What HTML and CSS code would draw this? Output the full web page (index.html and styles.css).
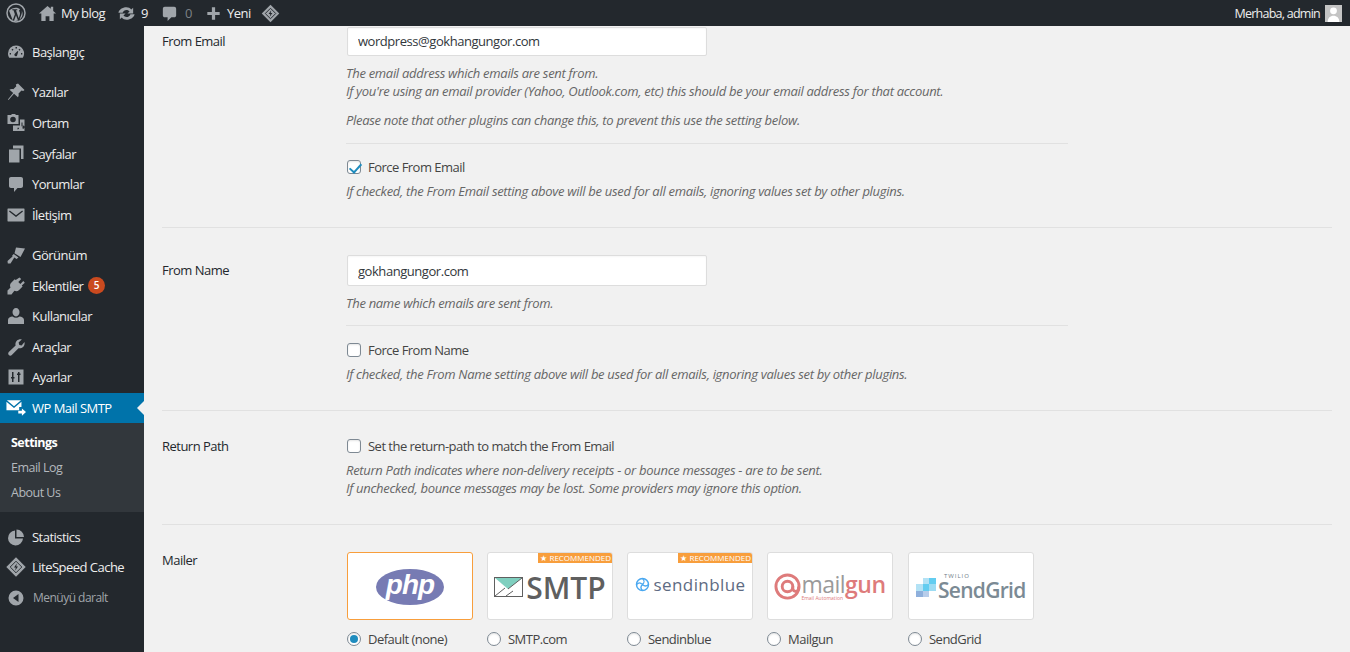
FILE: index.html
```html
<!DOCTYPE html>
<html lang="tr">
<head>
  <meta charset="UTF-8">
  <title>WP Mail SMTP Settings</title>
  <link rel="stylesheet" href="styles.css">
</head>
<body>

  <!-- TOP BAR -->
  <header class="admin-bar">
    <div class="bar-left">
      <span class="bar-item wp-item">
        <svg class="bar-icon wp-icon" viewBox="0 0 20 20"><circle cx="10" cy="10" r="9" fill="none" stroke="currentColor" stroke-width="1.500"/><path d="M2.900 7.300 6.700 17.300l2.200-6L7.500 7.300H6.300V6.300h5v1h-1.300l2.700 8 1-3c.5-1.600.4-2.500-.2-3.500-.6-.9-.6-2.200.8-2.300-2.600-2.600-7.800-2.400-11.400 1.500zM10 12.200l-2 5.500c1.300.4 2.700.3 4-.1zM15.700 7.600c.4 1.300.2 2.600-.3 4l-1.900 5c3-1.700 4-6 2.200-9z" fill="currentColor"/></svg>
      </span>
      <span class="bar-item home-item">
        <svg class="bar-icon" viewBox="0 0 20 20"><path d="M10 2 1 10h2.500v8h4.500v-5h4v5h4.500v-8H19l-3-2.700V3h-2.500v2.100z" fill="currentColor"/></svg>
        <span>My blog</span>
      </span>
      <span class="bar-item update-item">
        <svg class="bar-icon" viewBox="0 0 20 20"><path d="M10 3.500c2 0 3.800.9 5 2.400L17 4v6h-6l2.200-2.200c-.8-.9-2-1.500-3.200-1.500-1.900 0-3.500 1.200-4.100 3H1.500c.7-3.300 4-5.800 8.500-5.800zM10 16.500c-2 0-3.800-.9-5-2.400L3 16v-6h6l-2.200 2.200c.8.9 2 1.500 3.200 1.500 1.900 0 3.500-1.200 4.100-3h4.400c-.7 3.300-4 5.800-8.500 5.800z" fill="currentColor"/></svg>
        <span class="bar-count">9</span>
      </span>
      <span class="bar-item comment-item">
        <svg class="bar-icon" viewBox="0 0 20 20"><path d="M5 3h10c1.100 0 2 .9 2 2v7c0 1.100-.9 2-2 2h-3l-4 4v-4H5c-1.100 0-2-.9-2-2V5c0-1.100.9-2 2-2z" fill="currentColor"/></svg>
        <span class="dim-count">0</span>
      </span>
      <span class="bar-item new-item">
        <svg class="bar-icon" viewBox="0 0 20 20"><path d="M8.300 3.500h3.400v4.800h4.800v3.400h-4.800v4.800H8.300v-4.800H3.500V8.300h4.800z" fill="currentColor"/></svg>
        <span>Yeni</span>
      </span>
      <span class="bar-item ls-item">
        <svg class="bar-icon ls-icon" viewBox="0 0 20 20"><path d="M10 .8 19.200 10 10 19.200.8 10z" fill="currentColor"/><path d="M10 4.500 15.500 10 10 15.500 4.500 10z" fill="none" stroke="#23282d" stroke-width="1"/><path d="M10.800 6.500 8 10.500h1.800l-.6 3 2.800-4h-1.800z" fill="#23282d"/></svg>
      </span>
    </div>
    <div class="bar-right">
      <span>Merhaba, admin</span>
      <span class="avatar">
        <svg viewBox="0 0 16 16"><rect width="16" height="16" fill="#c4c4c4"/><circle cx="8" cy="5.500" r="3.200" fill="#fff"/><path d="M2.500 16c0-4 2.500-6 5.500-6s5.500 2 5.500 6z" fill="#fff"/></svg>
      </span>
    </div>
  </header>

  <div class="wrap">

    <!-- SIDEBAR -->
    <nav class="sidebar">
      <ul class="menu first-group">
        <li class="menu-item">
          <svg class="menu-icon" viewBox="0 0 20 20"><path d="M10 3.500a8 8 0 0 0-8 8c0 1.600.5 3 1.200 4.200h13.600A8 8 0 0 0 10 3.500zM5 12.500H3.700v-1.500H5zm1.500-3.700-1-1 1-1 1 1zm3-2.300V5h1.500v1.500zm1.500 7.200a1.500 1.500 0 0 1-2.600-1.400l3.100-3.300.8.400zm2.500-4.900-1-1 1-1 1 1zm2.800 3.700H15v-1.500h1.300z" fill="currentColor" fill-rule="evenodd"/></svg>
          <span>Başlangıç</span>
        </li>
      </ul>
      <ul class="menu group">
        <li class="menu-item">
          <svg class="menu-icon" viewBox="0 0 20 20"><path d="M12 1.500 18.500 8 17.200 9 15.500 8.500 12.500 11.500c.4 1.500.2 2.800-.6 3.700L8 11.800 2.500 18l-.6-.6L7.200 11 3.500 7.800c.9-.8 2.400-1 3.800-.6l3-3-.5-1.600z" fill="currentColor"/></svg>
          <span>Yazılar</span>
        </li>
        <li class="menu-item">
          <svg class="menu-icon" viewBox="0 0 20 20"><path d="M1.500 2h3.500l1-1h3l1 1h2.500v9h-11zM7 3.700A2.800 2.800 0 1 0 7 9.300 2.800 2.800 0 0 0 7 3.700zM14 6.500h4.500V18H7v-5.500h7zM11.500 16.500a1.700 1.700 0 0 0 1.700-1.700H11.500zM16.500 15.500a1.500 1.500 0 1 0-1-1.400V9.500h1z" fill="currentColor" fill-rule="evenodd"/></svg>
          <span>Ortam</span>
        </li>
        <li class="menu-item">
          <svg class="menu-icon" viewBox="0 0 20 20"><path d="M7 1.500h10.500v13.500h-2.500V4.500H7zM3 5.500h10.500V18.500H3z" fill="currentColor"/></svg>
          <span>Sayfalar</span>
        </li>
        <li class="menu-item">
          <svg class="menu-icon" viewBox="0 0 20 20"><path d="M5 3h10c1.100 0 2 .9 2 2v7c0 1.100-.9 2-2 2h-3.500L8 18v-4H5c-1.100 0-2-.9-2-2V5c0-1.100.9-2 2-2z" fill="currentColor"/></svg>
          <span>Yorumlar</span>
        </li>
        <li class="menu-item">
          <svg class="menu-icon" viewBox="0 0 20 20"><path d="M2 3.500h16c.3 0 .5.200.5.500v12c0 .3-.2.500-.5.500H2c-.3 0-.5-.2-.5-.5V4c0-.3.200-.5.500-.5zm1 3L10 12l7-5.500-.8-1L10 10.200 3.800 5.500z" fill="currentColor" fill-rule="evenodd"/></svg>
          <span>İletişim</span>
        </li>
      </ul>
      <ul class="menu group">
        <li class="menu-item">
          <svg class="menu-icon" viewBox="0 0 20 20"><path d="M10 2.500 19 3.500 14.500 12 8.500 8.300zM7.700 9 12.500 12.500 10.500 14 8.300 12.500 4.500 18.500H1.800L1.500 16l5-4.500-.3-.9z" fill="currentColor"/></svg>
          <span>Görünüm</span>
        </li>
        <li class="menu-item">
          <svg class="menu-icon" viewBox="0 0 20 20"><path d="M13.500 1.500 15.200 3l-2.900 3 2 2L17.300 5l1.500 1.700-3 2.900.8 1-3.500 3.500c-1.300 1.300-3.200 1.500-4.700.7L5.500 18.500H1.500v-4l3-3c-.8-1.500-.6-3.400.7-4.700l3.500-3.500 1 .8z" fill="currentColor"/></svg>
          <span>Eklentiler</span>
          <span class="badge">5</span>
        </li>
        <li class="menu-item">
          <svg class="menu-icon" viewBox="0 0 20 20"><path d="M10 2c2 0 3.500 1.700 3.500 4s-1.500 4.500-3.500 4.500S6.500 8.300 6.500 6 8 2 10 2zM6.500 10.500c1 .8 2.200 1.200 3.500 1.200s2.500-.4 3.500-1.200c2.200.3 4.500 1.300 4.500 3.500v4H2v-4c0-2.200 2.300-3.200 4.500-3.500z" fill="currentColor"/></svg>
          <span>Kullanıcılar</span>
        </li>
        <li class="menu-item">
          <svg class="menu-icon" viewBox="0 0 20 20"><path d="M18.500 5c.4 1.800-.1 3.700-1.400 5-1.300 1.200-3 1.600-4.600 1.200l-6.700 6.900c-.8.800-2.200.8-3 0-.8-.8-.8-2.200 0-3l6.800-6.600c-.5-1.700 0-3.500 1.200-4.700 1.300-1.300 3.100-1.800 5-1.400l-3.200 3.200.7 2.300 2.300.7z" fill="currentColor"/></svg>
          <span>Araçlar</span>
        </li>
        <li class="menu-item">
          <svg class="menu-icon" viewBox="0 0 20 20"><path d="M2.500 2.500h15v15h-15zM6 5v5H5v1.500h1V15h1.500v-3.500h1V10h-1V5zM12 5v1.500h-1V8h1v7h1.500V8h1V6.500h-1V5z" fill="currentColor" fill-rule="evenodd"/></svg>
          <span>Ayarlar</span>
        </li>
        <li class="menu-item is-current">
          <svg class="menu-icon mail-icon" viewBox="0 0 22 20"><path d="M1 1.500h15.500L8.800 8zM.5 3l8.300 7L17 3v6h-2.500v3.500H.5z" fill="currentColor"/><path d="M13.500 13h4v-2.500l4.500 4-4.500 4v-2.500h-4z" fill="currentColor"/></svg>
          <span>WP Mail SMTP</span>
        </li>
      </ul>
      <ul class="submenu">
        <li class="sub-item is-active">Settings</li>
        <li class="sub-item">Email Log</li>
        <li class="sub-item">About Us</li>
      </ul>
      <ul class="menu last-group">
        <li class="menu-item">
          <svg class="menu-icon" viewBox="0 0 20 20"><path d="M10.500 2.500a7.500 7.500 0 0 1 7.500 7.500h-7.500zM9 3.500V11.500h8a7.500 7.500 0 1 1-8-8z" fill="currentColor"/></svg>
          <span>Statistics</span>
        </li>
        <li class="menu-item">
          <svg class="menu-icon ls-side" viewBox="0 0 20 20"><path d="M10 .3 19.700 10 10 19.700.3 10z" fill="currentColor"/><path d="M10 4.200 15.800 10 10 15.800 4.200 10z" fill="none" stroke="#23282d" stroke-width=".9"/><path d="M10.800 6.500 8 10.500h1.800l-.6 3 2.800-4h-1.800z" fill="#23282d"/></svg>
          <span>LiteSpeed Cache</span>
        </li>
        <li class="menu-item collapse-item">
          <svg class="menu-icon" viewBox="0 0 20 20"><path d="M10 2.500a7.500 7.500 0 1 1 0 15 7.500 7.500 0 0 1 0-15zM12.500 6 7 10l5.500 4z" fill="currentColor" fill-rule="evenodd"/></svg>
          <span>Menüyü daralt</span>
        </li>
      </ul>
    </nav>

    <!-- CONTENT -->
    <main class="content">

      <section class="row email-row">
        <div class="row-label">From Email</div>
        <div class="row-field">
          <input class="text-input" type="text" value="wordpress@gokhangungor.com">
          <p class="desc gap-8">The email address which emails are sent from.<br>If you're using an email provider (Yahoo, Outlook.com, etc) this should be your email address for that account.</p>
          <p class="desc gap-11">Please note that other plugins can change this, to prevent this use the setting below.</p>
          <hr class="inner-line">
          <label class="check-line"><input type="checkbox" checked> Force From Email</label>
          <p class="desc gap-6">If checked, the From Email setting above will be used for all emails, ignoring values set by other plugins.</p>
        </div>
      </section>

      <section class="row name-row">
        <div class="row-label">From Name</div>
        <div class="row-field">
          <input class="text-input" type="text" value="gokhangungor.com">
          <p class="desc gap-8">The name which emails are sent from.</p>
          <hr class="inner-line">
          <label class="check-line"><input type="checkbox"> Force From Name</label>
          <p class="desc gap-6">If checked, the From Name setting above will be used for all emails, ignoring values set by other plugins.</p>
        </div>
      </section>

      <section class="row return-row">
        <div class="row-label">Return Path</div>
        <div class="row-field">
          <label class="check-line"><input type="checkbox"> Set the return-path to match the From Email</label>
          <p class="desc gap-6">Return Path indicates where non-delivery receipts - or bounce messages - are to be sent.<br>If unchecked, bounce messages may be lost. Some providers may ignore this option.</p>
        </div>
      </section>

      <section class="row mailer-row">
        <div class="row-label">Mailer</div>
        <div class="mailers">

          <div class="mailer">
            <div class="logo-card is-selected">
              <div class="php-logo">php</div>
            </div>
            <label class="radio-line"><input type="radio" name="mailer" checked> Default (none)</label>
          </div>

          <div class="mailer">
            <div class="logo-card">
              <span class="ribbon">★ RECOMMENDED</span>
              <div class="smtp-logo">
                <svg viewBox="0 0 29 20" class="smtp-mark"><rect x=".5" y=".5" width="28" height="19" fill="#fff" stroke="#5f5f5f"/><path d="M1 1h27L14 12z" fill="#7fcfbf"/><path d="M1 19 11 11M28 1 14 12M12 19l7-5" stroke="#5f5f5f" fill="none"/></svg>
                <span>SMTP</span>
              </div>
            </div>
            <label class="radio-line"><input type="radio" name="mailer"> SMTP.com</label>
          </div>

          <div class="mailer">
            <div class="logo-card">
              <span class="ribbon">★ RECOMMENDED</span>
              <div class="sib-logo">
                <svg viewBox="0 0 20 20" class="sib-mark"><circle cx="10" cy="10" r="8" fill="none" stroke="#4aa8f0" stroke-width="2"/><path d="M10 2c3 3 3 5 0 8s-3 5 0 8M2 10c3-3 5-3 8 0s5 3 8 0" fill="none" stroke="#4aa8f0" stroke-width="1.600"/></svg>
                <span>sendinblue</span>
              </div>
            </div>
            <label class="radio-line"><input type="radio" name="mailer"> Sendinblue</label>
          </div>

          <div class="mailer">
            <div class="logo-card">
              <div class="mg-logo">
                <svg viewBox="0 0 28 28" class="mg-mark"><circle cx="14" cy="14" r="12" fill="none" stroke="#de7b7b" stroke-width="3"/><circle cx="14" cy="14" r="5.500" fill="none" stroke="#de7b7b" stroke-width="3"/><path d="M19.500 14v2a3 3 0 0 0 6 0v-2" fill="none" stroke="#de7b7b" stroke-width="3"/></svg>
                <div class="mg-words">
                  <div class="mg-name"><span class="mg-grey">mail</span><span class="mg-red">gun</span></div>
                  <div class="mg-tag">Email Automation</div>
                </div>
              </div>
            </div>
            <label class="radio-line"><input type="radio" name="mailer"> Mailgun</label>
          </div>

          <div class="mailer sendgrid">
            <div class="logo-card">
              <div class="sg-logo">
                <div class="sg-mark">
                  <i></i><i class="c1"></i><i class="c2"></i>
                  <i class="c1"></i><i class="c2"></i><i class="c3"></i>
                  <i class="c4"></i><i class="c5"></i><i></i>
                </div>
                <div class="sg-words">
                  <div class="sg-tw">TWILIO</div>
                  <div class="sg-name">SendGrid</div>
                </div>
              </div>
            </div>
            <label class="radio-line"><input type="radio" name="mailer"> SendGrid</label>
          </div>

        </div>
      </section>

    </main>
  </div>

</body>
</html>
```

FILE: styles.css
```css
/* PAGE */
* {
  box-sizing: border-box;
}

html, body {
  margin: 0;
  height: 652px;
  overflow: hidden;
}

body {
  display: flex;
  flex-direction: column;
  background-color: #f1f1f1;
  color: #444;
  font-family: "Open Sans", "Noto Sans", sans-serif;
  font-size: 13px;
  letter-spacing: -0.52px;
}

ul {
  margin: 0;
  padding: 0;
  list-style: none;
}

/* TOP BAR */
.admin-bar {
  height: 26px;
  flex: none;
  display: flex;
  justify-content: space-between;
  align-items: center;
  background-color: #23282d;
  color: #eee;
}

.bar-left,
.bar-right {
  display: flex;
  align-items: center;
}

.bar-item {
  display: flex;
  align-items: center;
  gap: 4px;
}

.bar-icon {
  width: 19px;
  height: 19px;
  color: #a0a5aa;
}

.wp-icon {
  width: 20px;
  height: 20px;
}

.wp-item { margin-left: 6px; }
.home-item { margin-left: 12px; }
.update-item { margin-left: 12px; }
.comment-item { margin-left: 12px; }
.new-item { margin-left: 12px; }
.ls-item { margin-left: 10px; }

.dim-count {
  color: #7c8186;
  margin-left: 2px;
}

.bar-count { margin-left: 1px; }

.bar-right {
  gap: 5px;
  margin-right: 8px;
  font-size: 12.5px;
  letter-spacing: -0.75px;
}

.avatar {
  width: 17px;
  height: 17px;
  display: block;
}

.avatar svg {
  display: block;
  width: 100%;
  height: 100%;
}

/* SIDEBAR */
.wrap {
  flex: 1;
  display: flex;
  min-height: 0;
}

.sidebar {
  width: 144px;
  flex: none;
  background-color: #23282d;
  color: #eee;
  padding-top: 11px;
}

.group {
  margin-top: 9.6px;
}

.menu-item {
  height: 30.6px;
  display: flex;
  align-items: center;
  padding-left: 6px;
  gap: 6px;
}

.menu-icon {
  width: 20px;
  height: 20px;
  flex: none;
  color: #a0a5aa;
}

.is-current {
  position: relative;
  background-color: #0073aa;
  color: #fff;
  font-weight: 500;
}

.is-current .menu-icon {
  color: #fff;
}

/* little arrow pointing at the page */
.is-current::after {
  content: "";
  position: absolute;
  right: 0;
  top: 50%;
  margin-top: -7px;
  border: 7px solid transparent;
  border-right-color: #f1f1f1;
  border-left-width: 0;
}

.badge {
  width: 17px;
  height: 17px;
  margin-left: -1px;
  border-radius: 50%;
  background-color: #ca4a1f;
  color: #fff;
  font-size: 10px;
  font-weight: 600;
  line-height: 17px;
  letter-spacing: 0;
  text-align: center;
}

.submenu {
  background-color: #32373c;
  padding: 7px 0;
  height: 89px;
}

.sub-item {
  height: 25px;
  line-height: 25px;
  padding-left: 11px;
  color: #b4b9be;
  font-size: 12.5px;
}

.sub-item.is-active {
  color: #fff;
  font-weight: 700;
}

.last-group {
  margin-top: 9px;
}

.collapse-item {
  color: #a0a5aa;
  font-size: 12px;
}

.collapse-item span {
  margin-left: 1px;
}

/* CONTENT */
.content {
  flex: 1;
  min-width: 0;
  padding: 0 18px;
}

.row {
  display: flex;
  border-bottom: 1px solid #e1e1e1;
}

.email-row { padding: 1px 0 27px; }
.name-row { padding: 27px 0 27px; }
.return-row { padding: 26px 0 27px; }
.mailer-row { padding: 27px 0 0; border-bottom: 0; }

.row-label {
  width: 184px;
  flex: none;
  color: #23282d;
  font-weight: 500;
  line-height: 29px;
}

.name-row .row-label {
  line-height: 31px;
}

.return-row .row-label {
  line-height: 18px;
}

.mailer-row .row-label {
  line-height: 16px;
}

.row-field {
  width: 722px;
}

.text-input {
  display: block;
  width: 360px;
  height: 29px;
  margin-left: 1px;
  padding: 0 10px 2px;
  background-color: #fff;
  border: 1px solid #ddd;
  border-radius: 2px;
  box-shadow: inset 0 1px 2px rgba(0, 0, 0, 0.04);
  color: #32373c;
  font: inherit;
  letter-spacing: -0.45px;
}

.name-row .text-input {
  height: 31px;
  padding-bottom: 0;
}

.desc {
  margin: 0;
  color: #666;
  font-style: italic;
  font-size: 13px;
  line-height: 18px;
  letter-spacing: -0.3px;
}

.gap-6 { margin-top: 6px; }
.gap-8 { margin-top: 8px; }
.gap-11 { margin-top: 11px; }

.inner-line {
  margin: 14px 0;
  border: 0;
  border-top: 1px solid #e1e1e1;
}

.name-row .inner-line {
  margin: 13px 0 15px;
}

.check-line,
.radio-line {
  display: flex;
  align-items: center;
  height: 18px;
  color: #444;
}

/* CHECKBOX AND RADIO */
input[type="checkbox"],
input[type="radio"] {
  appearance: none;
  position: relative;
  width: 14px;
  height: 14px;
  margin: 0 7px 0 1px;
  flex: none;
  background-color: #fff;
  border: 1px solid #7e8993;
  box-shadow: inset 0 1px 2px rgba(0, 0, 0, 0.1);
}

input[type="checkbox"] {
  border-radius: 3px;
}

input[type="radio"] {
  margin-left: 0;
  border-radius: 50%;
}

input[type="checkbox"]:checked::before {
  content: "";
  position: absolute;
  left: 3.5px;
  top: -0.5px;
  width: 5px;
  height: 10px;
  border: solid #1e8cbe;
  border-width: 0 2px 2px 0;
  transform: rotate(42deg);
}

input[type="radio"]:checked::before {
  content: "";
  position: absolute;
  left: 2px;
  top: 2px;
  width: 8px;
  height: 8px;
  border-radius: 50%;
  background-color: #1e8cbe;
}

/* MAILER CARDS */
.mailers {
  display: flex;
  gap: 14px;
  margin-left: 1px;
}

.mailer {
  width: 126px;
}

.mailer.sendgrid {
  margin-left: 1px;
}

.logo-card {
  position: relative;
  display: flex;
  align-items: center;
  justify-content: center;
  height: 68px;
  margin-bottom: 10px;
  overflow: hidden;
  background-color: #fff;
  border: 1px solid #ddd;
  border-radius: 3px;
}

.logo-card.is-selected {
  border-color: #f89e3c;
}

.ribbon {
  position: absolute;
  top: 0;
  right: 0;
  height: 10px;
  padding: 0 1px 0 2px;
  background-color: #f89e3c;
  color: #fff;
  font-size: 8px;
  line-height: 10px;
  letter-spacing: 0;
  white-space: nowrap;
}

.php-logo {
  width: 68px;
  height: 36px;
  margin-top: 1px;
  border-radius: 50%;
  background-color: #777bb3;
  color: #fff;
  font-family: "Liberation Sans", sans-serif;
  font-size: 28px;
  font-style: italic;
  font-weight: 700;
  line-height: 32px;
  letter-spacing: -1px;
  text-align: center;
}

.smtp-logo {
  display: flex;
  align-items: center;
  gap: 3px;
  margin-top: 2px;
  color: #5f5f5f;
  font-size: 30px;
  font-weight: 600;
  letter-spacing: 0;
}

.smtp-mark {
  width: 29px;
  height: 20px;
}

.sib-logo {
  display: flex;
  align-items: center;
  gap: 4px;
  color: #5e6b82;
  font-size: 17px;
  letter-spacing: 0.4px;
  margin-top: -3px;
}

.sib-mark {
  width: 15px;
  height: 15px;
}

.mg-logo {
  display: flex;
  align-items: center;
  margin-top: 1px;
}

.mg-mark {
  width: 27px;
  height: 27px;
}

.mg-name {
  font-size: 23px;
  font-weight: 500;
  line-height: 23px;
  letter-spacing: -0.5px;
}

.mg-grey { color: #9a9a9a; }

.mg-red {
  color: #de7b7b;
  font-weight: 600;
}

.mg-tag {
  color: #de7b7b;
  font-size: 5px;
  line-height: 5px;
  letter-spacing: 0;
}

.sg-logo {
  display: flex;
  align-items: center;
  gap: 2px;
}

.sg-mark {
  display: grid;
  grid-template-columns: repeat(3, 6.5px);
  grid-auto-rows: 6.5px;
  margin-top: 3px;
}

.sg-mark .c1 { background-color: #b3e2f5; }
.sg-mark .c2 { background-color: #63cdf0; }
.sg-mark .c3 { background-color: #9ddcf3; }
.sg-mark .c4 { background-color: #8fb0dc; }
.sg-mark .c5 { background-color: #b8cdea; }

.sg-tw {
  margin-left: 6px;
  color: #6d7b87;
  font-size: 6px;
  line-height: 8px;
  letter-spacing: 1px;
}

.sg-name {
  color: #7b8a94;
  font-size: 21px;
  font-weight: 600;
  line-height: 21px;
  letter-spacing: -0.7px;
}
```
